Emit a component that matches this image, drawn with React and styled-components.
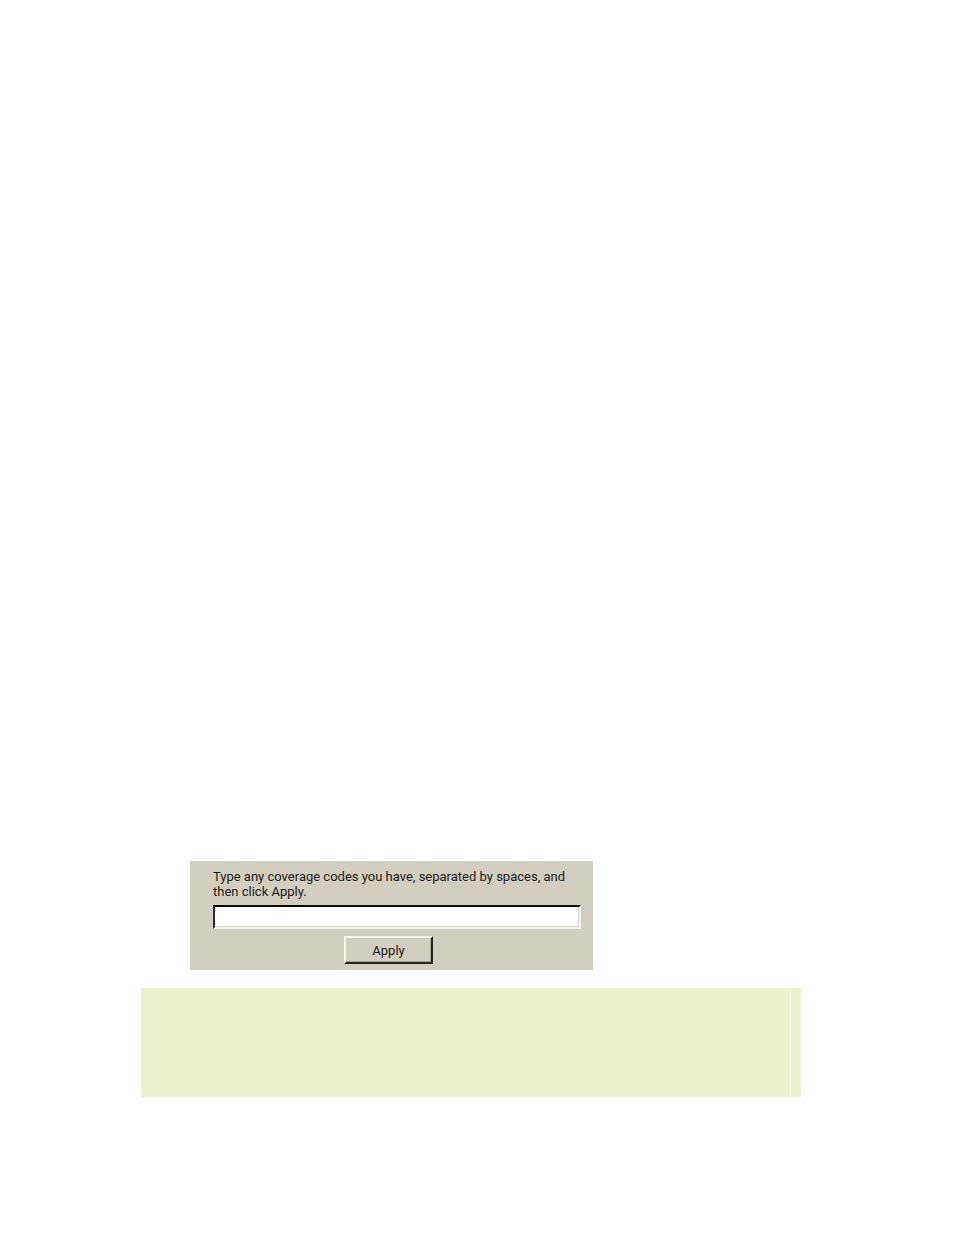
import React, { useState } from 'react';
import styled, { createGlobalStyle } from 'styled-components';

const GlobalStyle = createGlobalStyle`
  * {
    box-sizing: border-box;
  }
  body {
    margin: 0;
    background-color: #ffffff;
    font-family: Roboto, "Liberation Sans", sans-serif;
  }
`;

// The content sits at the bottom of the sheet
const Page = styled.main`
  min-height: 100vh;
  display: flex;
  flex-direction: column;
  justify-content: flex-end;
  gap: 18px;
  padding: 40px 153px 138px 141px;
`;

const CoverageForm = styled.form`
  width: 100%;
  max-width: 403px;
  margin: 0 0 0 49px;
  padding: 8px 12px 6px 23px;
  display: flex;
  flex-direction: column;
  align-items: center;
  background-color: #d2cec0;
`;

const Label = styled.label`
  width: 100%;
  margin-bottom: 6px;
  color: #1c1b18;
  font-size: 13px;
  line-height: 15px;
`;

const CodesInput = styled.input`
  width: 100%;
  height: 24px;
  margin-bottom: 7px;
  padding: 0 4px;
  border: 2px solid;
  border-color: #0c0c0c #f4f2ea #f4f2ea #2c2b28;
  border-radius: 0;
  outline: none;
  background-color: #ffffff;
  box-shadow: inset -1px -1px 0 #d8d4c8;
  font-family: inherit;
  font-size: 13px;
`;

const ApplyButton = styled.button`
  width: 89px;
  height: 28px;
  margin-right: 17px;
  padding: 0;
  border: 2px solid;
  border-color: #f8f6ee #24231f #24231f #f8f6ee;
  border-radius: 0;
  background-color: #d2cec0;
  box-shadow: inset -1px -1px 0 #a5a194;
  color: #1c1b18;
  font-family: inherit;
  font-size: 13px;
  line-height: 15px;
`;

const Note = styled.aside`
  height: 109px;
  padding: 2px 10px 1px 0;
  display: flex;
  background-color: #eef1d0;
`;

const NoteBody = styled.div`
  flex: 1;
  border-right: 1px solid #f5f6e4;
`;

const App = () => {
  const [codes, setCodes] = useState('');

  return (
    <>
      <GlobalStyle />
      <Page>
        <CoverageForm onSubmit={(event) => event.preventDefault()}>
          <Label htmlFor="codes">
            Type any coverage codes you have, separated by spaces, and then click Apply.
          </Label>
          <CodesInput
            id="codes"
            type="text"
            value={codes}
            onChange={(event) => setCodes(event.target.value)}
          />
          <ApplyButton type="submit">Apply</ApplyButton>
        </CoverageForm>
        <Note>
          <NoteBody />
        </Note>
      </Page>
    </>
  );
};

export default App;
